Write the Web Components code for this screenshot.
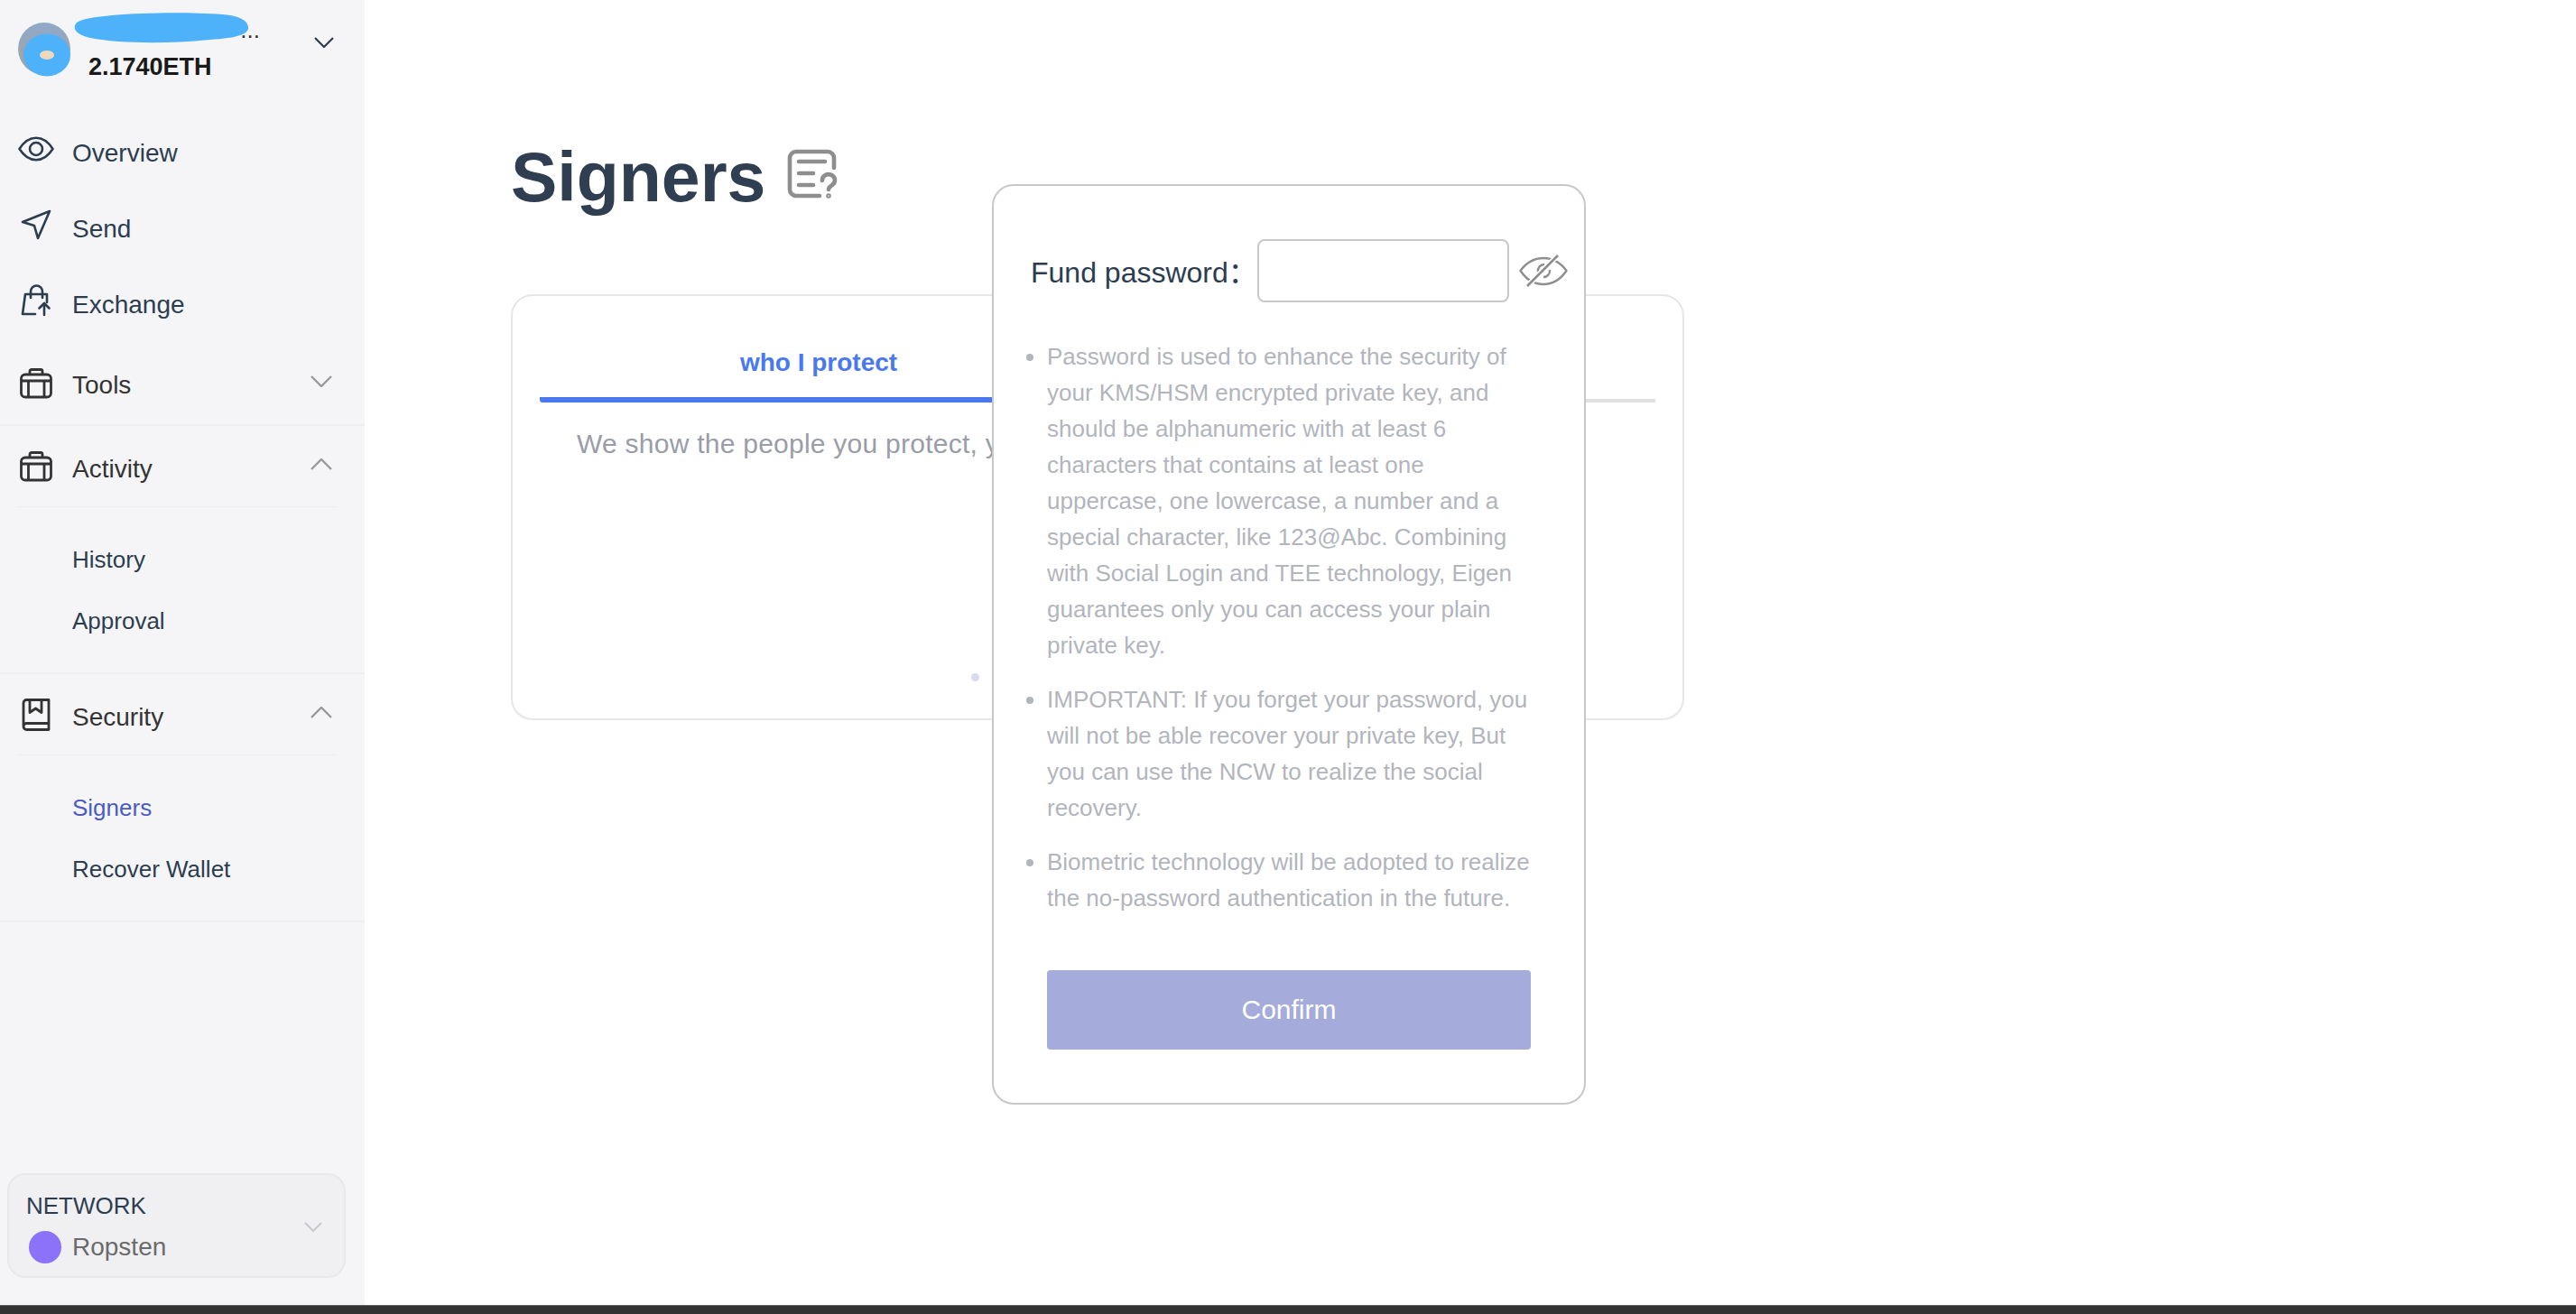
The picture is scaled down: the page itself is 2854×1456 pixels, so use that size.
<!DOCTYPE html>
<html lang="en">
<head>
<meta charset="utf-8">
<title>Signers</title>
<style>
  html, body {
    margin: 0;
    height: 100%;
    background: #fff;
    font-family: "Liberation Sans", "Noto Sans CJK SC", sans-serif;
  }
</style>
</head>
<body>
<app-shell>
  <side-bar slot="side">
    <wallet-account balance="2.1740ETH"></wallet-account>
    <side-link icon="eye" label="Overview"></side-link>
    <side-link icon="send" label="Send"></side-link>
    <side-link icon="bag" label="Exchange" last></side-link>
    <side-group icon="case" label="Tools"></side-group>
    <side-group icon="case" label="Activity" open>
      <sub-link>History</sub-link>
      <sub-link>Approval</sub-link>
    </side-group>
    <side-group icon="book" label="Security" open>
      <sub-link active>Signers</sub-link>
      <sub-link>Recover Wallet</sub-link>
    </side-group>
    <network-box name="Ropsten"></network-box>
  </side-bar>
  <signers-page></signers-page>
  <password-modal slot="over">
    <li>Password is used to enhance the security of your KMS/HSM encrypted private key, and should be alphanumeric with at least 6 characters that contains at least one uppercase, one lowercase, a number and a special character, like 123@Abc. Combining with Social Login and TEE technology, Eigen guarantees only you can access your plain private key.</li>
    <li>IMPORTANT: If you forget your password, you will not be able recover your private key, But you can use the NCW to realize the social recovery.</li>
    <li>Biometric technology will be adopted to realize the no-password authentication in the future.</li>
  </password-modal>
</app-shell>

<script>
const ICONS = {
  eye: `<svg width="40" height="28" viewBox="0 0 40 28" fill="none" stroke="#2d3d50" stroke-width="2.6" stroke-linejoin="round"><path d="M1.5 14C7 5.5 13 1.8 20 1.8S33 5.5 38.5 14C33 22.5 27 26.2 20 26.2S7 22.5 1.5 14Z"/><circle cx="20" cy="14" r="7"/></svg>`,
  send: `<svg width="34" height="34" viewBox="0 0 34 34" fill="none" stroke="#2d3d50" stroke-width="2.6" stroke-linejoin="round" stroke-linecap="round"><path d="M32 2 2 14l13 4 4 14L32 2Z"/></svg>`,
  bag: `<svg width="34" height="36" viewBox="0 0 34 36" fill="none" stroke="#2d3d50" stroke-width="2.6" stroke-linecap="round" stroke-linejoin="round"><path d="M16 33H2L5 11h24v9"/><path d="M11 15V8a6.5 6.5 0 0 1 13 0v7"/><path d="M26 34V21M20.500 26.500 26 21l5.500 5.500"/></svg>`,
  "case": `<svg width="36" height="34" viewBox="0 0 36 34" fill="none" stroke="#333" stroke-width="2.8" stroke-linejoin="round"><rect x="1.500" y="7" width="33" height="25" rx="4.500"/><path d="M11 7V3.500A2 2 0 0 1 13 1.500h10a2 2 0 0 1 2 2V7M1.500 14h33M9.500 14v18M27 14v18"/></svg>`,
  book: `<svg width="32" height="36" viewBox="0 0 32 36" fill="none" stroke="#333" stroke-width="2.8" stroke-linejoin="round"><path d="M2 30V5a3.500 3.500 0 0 1 3.500-3.500H30v33H5.500A3.500 3.500 0 0 1 2 31a3.500 3.500 0 0 1 3.500-3.500H30"/><path d="M9 1.500V15.500l6.500-4.500 6.500 4.500V1.500"/></svg>`
};

const chevron = (up, w, color, sw) => {
  const h = Math.round(w * 0.55);
  const pts = up ? `1,${h - 1} ${w / 2},1 ${w - 1},${h - 1}` : `1,1 ${w / 2},${h - 1} ${w - 1},1`;
  return `<svg width="${w}" height="${h}" viewBox="0 0 ${w} ${h}" fill="none" stroke="${color}" stroke-width="${sw}"><polyline points="${pts}"/></svg>`;
};

const shellTemplate = document.createElement("template");
shellTemplate.innerHTML = `
  <style>
    :host {
      display: flex;
      flex-direction: column;
      height: 1456px;
      position: relative;
      overflow: hidden;
    }
    .row { flex: 1; display: flex; min-height: 0; }
    .content { flex: 1; min-width: 0; }
    .over {
      position: absolute;
      inset: 0;
      display: flex;
      justify-content: center;
      align-items: flex-start;
      padding: 204px 0 0 2px;
      box-sizing: border-box;
    }
    .bar { height: 9px; background: #333; border-top: 1px solid #5c5c5c; }
  </style>
  <div class="row">
    <slot name="side"></slot>
    <div class="content"><slot></slot></div>
  </div>
  <div class="bar"></div>
  <div class="over"><slot name="over"></slot></div>
`;

class AppShell extends HTMLElement {
  constructor() {
    super();
    this.attachShadow({ mode: "open" });
    this.shadowRoot.appendChild(shellTemplate.content.cloneNode(true));
  }
}

const sideTemplate = document.createElement("template");
sideTemplate.innerHTML = `
  <style>
    :host {
      display: flex;
      flex-direction: column;
      width: 404px;
      flex: none;
      background: #f5f5f7;
    }
  </style>
  <slot></slot>
`;

class SideBar extends HTMLElement {
  constructor() {
    super();
    this.attachShadow({ mode: "open" });
    this.shadowRoot.appendChild(sideTemplate.content.cloneNode(true));
  }
}

class WalletAccount extends HTMLElement {
  constructor() {
    super();
    this.attachShadow({ mode: "open" });
    this.shadowRoot.innerHTML = `
      <style>
        :host {
          display: flex;
          height: 128px;
          box-sizing: border-box;
          position: relative;
          padding: 25px 0 0 20px;
        }
        .avatar { flex: none; display: block; }
        .info { margin-left: 18px; width: 190px; }
        .name {
          height: 28px;
          line-height: 28px;
          font-size: 26px;
          text-align: right;
          color: #333;
          margin-top: -6px;
        }
        .balance {
          margin-top: 11px;
          font-size: 27px;
          line-height: 32px;
          font-weight: 700;
          color: #1a1a1a;
        }
        .scribble { position: absolute; left: 82px; top: 13px; }
        .toggle { margin: 14px 0 0 60px; }
      </style>
      <svg class="avatar" width="60" height="60" viewBox="0 0 60 60">
        <defs><linearGradient id="av" x1="0" y1="0" x2="0" y2="1"><stop offset="0" stop-color="#8fa9cc"/><stop offset="1" stop-color="#a3a39c"/></linearGradient></defs>
        <circle cx="29" cy="29" r="29" fill="url(#av)"/>
        <ellipse cx="32" cy="36" rx="26" ry="23.500" fill="#4db2fa"/>
        <ellipse cx="32" cy="36" rx="8" ry="5" fill="#eed9bd"/>
      </svg>
      <div class="info">
        <div class="name">...</div>
        <div class="balance">${this.getAttribute("balance")}</div>
      </div>
      <div class="toggle">${chevron(false, 22, "#2d3d50", 2.2)}</div>
      <svg class="scribble" width="194" height="36" viewBox="0 0 194 36"><path fill="#4db2fa" d="M3 12C16 2 110-1 165 3c20 1.500 29 8 28 16-2 8-22 11-43 12-50 5-100 4-132-2C3 26-3 19 3 12Z"/></svg>
    `;
  }
}

class SideLink extends HTMLElement {
  constructor() {
    super();
    this.attachShadow({ mode: "open" });
    this.shadowRoot.innerHTML = `
      <style>
        :host {
          display: flex;
          align-items: center;
          height: 84px;
          padding-left: 20px;
          font-size: 28px;
          color: #2d3d50;
        }
        .icon { width: 40px; height: 40px; margin-right: 20px; margin-top: -10px; display: flex; align-items: center; justify-content: center; }
      </style>
      <span class="icon">${ICONS[this.getAttribute("icon")]}</span>
      <span>${this.getAttribute("label")}</span>
    `;
  }
}

class SideGroup extends HTMLElement {
  constructor() {
    super();
    const open = this.hasAttribute("open");
    this.attachShadow({ mode: "open" });
    this.shadowRoot.innerHTML = `
      <style>
        :host {
          display: block;
          border-bottom: 2px solid #eeeef0;
        }
        .head {
          display: flex;
          align-items: center;
          height: 90px;
          box-sizing: border-box;
          margin: 0 32px 0 20px;
          padding-top: 3px;
          font-size: 28px;
          color: #333;
          ${open ? "border-bottom: 1px solid #eeeef0;" : ""}
        }
        .icon { width: 40px; height: 40px; margin-right: 20px; margin-top: -3px; display: flex; align-items: center; justify-content: center; }
        .label { flex: 1; ${open ? "padding-top: 3px;" : ""} }
        .arrow { margin: -8px 4px 0 0; display: flex; }
        .subs { padding: 24px 0 23px; }
      </style>
      <div class="head">
        <span class="icon">${ICONS[this.getAttribute("icon")]}</span>
        <span class="label">${this.getAttribute("label")}</span>
        <span class="arrow">${chevron(open, 24, "#9a9a9a", 2.4)}</span>
      </div>
      ${open ? `<div class="subs"><slot></slot></div>` : ""}
    `;
  }
}

const subTemplate = document.createElement("template");
subTemplate.innerHTML = `
  <style>
    :host {
      display: flex;
      align-items: center;
      height: 68px;
      padding-left: 80px;
      font-size: 26px;
      color: #2d3d50;
    }
    :host([active]) { color: #4a5cc4; }
  </style>
  <slot></slot>
`;

class SubLink extends HTMLElement {
  constructor() {
    super();
    this.attachShadow({ mode: "open" });
    this.shadowRoot.appendChild(subTemplate.content.cloneNode(true));
  }
}

class NetworkBox extends HTMLElement {
  constructor() {
    super();
    this.attachShadow({ mode: "open" });
    this.shadowRoot.innerHTML = `
      <style>
        :host {
          display: flex;
          align-items: center;
          margin: auto 21px 30px 8px;
          height: 116px;
          box-sizing: border-box;
          padding: 0 24px 0 21px;
          background: #f0f0f2;
          border: 2px solid #e8e8ea;
          border-radius: 20px;
        }
        .text { flex: 1; margin-top: 5px; }
        .title { font-size: 26px; line-height: 30px; color: #2d3d50; margin-left: -2px; }
        .net { display: flex; align-items: center; margin-top: 13px; font-size: 28px; color: #6b6b6b; }
        .dot { width: 36px; height: 36px; border-radius: 50%; background: #8b72f8; margin: 0 12px 0 1px; }
        .arrow { display: flex; margin-top: 2px; }
      </style>
      <div class="text">
        <div class="title">NETWORK</div>
        <div class="net"><span class="dot"></span>${this.getAttribute("name")}</div>
      </div>
      <span class="arrow">${chevron(false, 20, "#c8c8cc", 2)}</span>
    `;
  }
}

const pageTemplate = document.createElement("template");
pageTemplate.innerHTML = `
  <style>
    :host { display: block; padding: 150px 0 0 162px; }
    .head { display: flex; align-items: center; height: 92px; color: #2f3e50; }
    h1 { margin: 0; font-size: 77px; line-height: 92px; font-weight: 700; }
    .help { margin: -6px 0 0 24px; display: flex; }
    .card {
      position: relative;
      width: 1300px;
      height: 472px;
      margin-top: 84px;
      box-sizing: border-box;
      border: 2px solid #e6e6e6;
      border-radius: 24px;
      padding: 0 30px;
      background: #fff;
    }
    .tabs { display: flex; align-items: flex-end; height: 118px; }
    .tab { flex: 1; text-align: center; font-size: 28px; line-height: 32px; font-weight: 700; }
    .tab.on { color: #4a78ee; padding-bottom: 22px; border-bottom: 6px solid #4a78ee; border-radius: 3px; }
    .tab.off { height: 4px; background: #e0e0e0; }
    p { margin: 26px 0 0 41px; font-size: 30px; line-height: 40px; color: #9a9da8; white-space: nowrap; letter-spacing: .25px; }
    .spin { position: absolute; left: 508px; top: 418px; width: 9px; height: 9px; border-radius: 50%; background: #d9d9ef; }
  </style>
  <div class="head">
    <h1>Signers</h1>
    <span class="help">
      <svg width="56" height="56" viewBox="0 0 56 56" fill="none" stroke="#8e8e8e" stroke-width="4.600" stroke-linecap="round" stroke-linejoin="round">
        <path d="M52 21V10a7 7 0 0 0-7-7H10a7 7 0 0 0-7 7v35a7 7 0 0 0 7 7h26"/>
        <path d="M13 14h29M13 27h16M13 40h16"/>
        <path d="M39 35a7 6.500 0 1 1 11 5c-2 1.500-4 2.500-4 5"/>
        <circle cx="46" cy="52" r="1" stroke-width="3.600"/>
      </svg>
    </span>
  </div>
  <div class="card">
    <div class="tabs">
      <div class="tab on">who I protect</div>
      <div class="tab off"></div>
    </div>
    <p>We show the people you protect, you</p>
    <span class="spin"></span>
  </div>
`;

class SignersPage extends HTMLElement {
  constructor() {
    super();
    this.attachShadow({ mode: "open" });
    this.shadowRoot.appendChild(pageTemplate.content.cloneNode(true));
  }
}

const modalTemplate = document.createElement("template");
modalTemplate.innerHTML = `
  <style>
    :host {
      display: block;
      width: 658px;
      height: 1020px;
      box-sizing: border-box;
      background: #fff;
      border: 2px solid #c8c8c8;
      border-radius: 24px;
      padding: 59px 59px 0 59px;
    }
    .field { display: flex; align-items: center; height: 70px; margin-left: -18px; }
    label { font-size: 32px; color: #2d3d50; white-space: nowrap; margin-top: -3px; }
    input {
      width: 279px;
      height: 70px;
      box-sizing: border-box;
      border: 2px solid #c8c8c8;
      border-radius: 8px;
      background: #fff;
      outline: none;
      padding: 0 12px;
      margin-right: 11px;
      flex: none;
    }
    .eye { display: flex; }
    ul { margin: 40px 0 0; padding: 0; width: 537px; font-size: 26px; line-height: 40px; color: #b2b5bc; }
    ::slotted(li) { margin-bottom: 20px; }
    button {
      display: block;
      width: 536px;
      height: 88px;
      margin-top: 60px;
      border: 0;
      border-radius: 4px;
      background: #a5acdb;
      color: #fff;
      font: 30px "Liberation Sans", sans-serif;
    }
  </style>
  <div class="field">
    <label for="pw">Fund password：</label>
    <input id="pw" type="password">
    <span class="eye">
      <svg width="54" height="36" viewBox="0 0 54 36" fill="none" stroke="#8e8e8e" stroke-width="2.400" stroke-linejoin="round">
        <path d="M1.500 18C8 9 16 4 27 4s19 5 25.500 14C46 27.500 38 33 27 33S8 27.500 1.500 18Z"/>
        <path d="M21 19a7 7 0 0 1 7-8M34 17a7 7 0 0 1-7 8"/>
        <path d="M43 1 9 35" stroke="#fff" stroke-width="6"/>
        <path d="M43 1 9 35" stroke-width="2.600"/>
      </svg>
    </span>
  </div>
  <ul><slot></slot></ul>
  <button>Confirm</button>
`;

class PasswordModal extends HTMLElement {
  constructor() {
    super();
    this.attachShadow({ mode: "open" });
    this.shadowRoot.appendChild(modalTemplate.content.cloneNode(true));
  }
}

customElements.define("app-shell", AppShell);
customElements.define("side-bar", SideBar);
customElements.define("wallet-account", WalletAccount);
customElements.define("side-link", SideLink);
customElements.define("side-group", SideGroup);
customElements.define("sub-link", SubLink);
customElements.define("network-box", NetworkBox);
customElements.define("signers-page", SignersPage);
customElements.define("password-modal", PasswordModal);
</script>
</body>
</html>
